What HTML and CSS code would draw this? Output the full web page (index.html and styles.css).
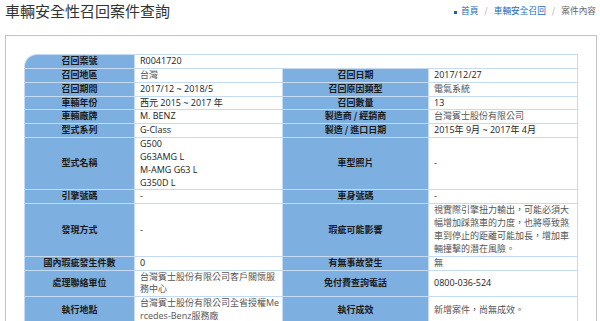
FILE: index.html
```html
<!DOCTYPE html>
<html lang="zh-Hant">
<head>
<meta charset="utf-8">
<title>車輛安全性召回案件查詢</title>
<link rel="stylesheet" href="styles.css">
</head>
<body>
<header class="header">
  <h1 class="title">車輛安全性召回案件查詢</h1>
  <nav class="crumbs">
    <span class="bullet"></span>
    <a href="#" class="crumb-link">首頁</a>
    <span class="sep">/</span>
    <a href="#" class="crumb-link">車輛安全召回</a>
    <span class="sep">/</span>
    <span class="crumb-current">案件內容</span>
  </nav>
</header>
<main class="panel">
  <table class="recall">
    <colgroup>
      <col class="c-l1"><col class="c-v1"><col class="c-l2"><col class="c-v2">
    </colgroup>
    <tr><th class="corner">召回案號</th><td colspan="3" class="dark">R0041720</td></tr>
    <tr><th>召回地區</th><td>台灣</td><th>召回日期</th><td class="dark">2017/12/27</td></tr>
    <tr><th>召回期間</th><td class="dark">2017/12 ~ 2018/5</td><th>召回原因類型</th><td>電氣系統</td></tr>
    <tr><th>車輛年份</th><td class="dark">西元 2015 ~ 2017 年</td><th>召回數量</th><td class="dark">13</td></tr>
    <tr><th>車輛廠牌</th><td class="dark">M. BENZ</td><th>製造商 / 經銷商</th><td>台灣賓士股份有限公司</td></tr>
    <tr><th>型式系列</th><td class="dark">G-Class</td><th>製造 / 進口日期</th><td class="dark">2015年 9月 ~ 2017年 4月</td></tr>
    <tr><th>型式名稱</th><td class="dark">G500<br>G63AMG L<br>M-AMG G63 L<br>G350D L</td><th>車型照片</th><td class="dark">-</td></tr>
    <tr><th>引擎號碼</th><td class="dark">-</td><th>車身號碼</th><td class="dark">-</td></tr>
    <tr><th>發現方式</th><td class="dark">-</td><th>瑕疵可能影響</th><td>視實際引擎扭力輸出，可能必須大幅增加踩煞車的力度，也將導致煞車到停止的距離可能加長，增加車輛撞擊的潛在風險。</td></tr>
    <tr><th>國內瑕疵發生件數</th><td class="dark">0</td><th>有無事故發生</th><td>無</td></tr>
    <tr><th>處理聯絡單位</th><td>台灣賓士股份有限公司客戶關懷服務中心</td><th>免付費查詢電話</th><td class="dark">0800-036-524</td></tr>
    <tr><th>執行地點</th><td>台灣賓士股份有限公司全省授權Mercedes-Benz服務廠</td><th>執行成效</th><td>新增案件，尚無成效。</td></tr>
    <tr class="more"><th></th><td></td><th></th><td></td></tr>
  </table>
</main>
</body>
</html>
```

FILE: styles.css
```css
html, body {
  margin: 0;
  padding: 0;
  background: #ffffff;
}
body {
  font-family: "Open Sans", "Noto Sans CJK TC", sans-serif;
  color: #333;
}
.header {
  display: flex;
  justify-content: space-between;
  align-items: center;
  height: 20px;
  padding: 1px 4px 0 5px;
}
.title {
  margin: 0;
  font-family: "Noto Sans CJK TC", sans-serif;
  font-size: 15px;
  font-weight: 400;
  line-height: 18px;
  color: #333;
}
.crumbs {
  display: flex;
  align-items: center;
  gap: 4px;
  font-family: "Noto Sans CJK TC", sans-serif;
  font-size: 8.7px;
  line-height: 12px;
  margin-top: -1px;
}
.bullet {
  width: 3px;
  height: 3px;
  background: #1c5fb0;
  margin-top: 3px;
}
.crumb-link {
  color: #2668b8;
  text-decoration: none;
}
.sep {
  color: #aaa;
  padding: 0 2px;
}
.crumb-current {
  color: #666;
}
.panel {
  display: block;
  margin: 14px 3px 0 5px;
  border: 1px solid #c2c2c2;
  height: 400px;
  padding: 18px 18px 0 18px;
}
.recall {
  table-layout: fixed;
  width: 554px;
  border-collapse: separate;
  border-spacing: 1px;
  background: #c4dbf2;
  border-top-left-radius: 13px;
  font-size: 9px;
  line-height: 12.85px;
}
.c-l1 { width: 109px; }
.c-v1 { width: 147px; }
.c-l2 { width: 145px; }
.c-v2 { width: 148px; }
.recall th {
  background: #7dafe1;
  color: #1a1a1a;
  font-family: "Noto Sans CJK TC", sans-serif;
  font-weight: 700;
  text-align: center;
  vertical-align: middle;
  padding: 0;
}
.recall th.corner {
  border-top-left-radius: 12px;
}
.recall td {
  background: #ffffff;
  color: #555;
  text-align: left;
  vertical-align: middle;
  padding: 0 2px 0 5px;
  word-break: break-all;
}
.recall td.dark {
  color: #222;
}
.recall tr.more th,
.recall tr.more td {
  height: 13px;
}
```
